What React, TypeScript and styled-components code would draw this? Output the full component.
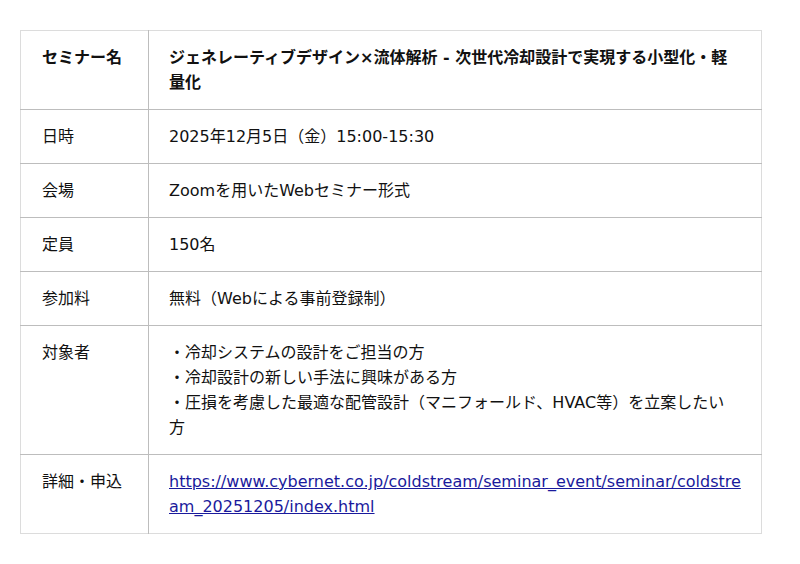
import React from 'react';
import styled, { createGlobalStyle } from 'styled-components';

const GlobalStyle = createGlobalStyle`
  html, body {
    margin: 0;
    padding: 0;
    background: #fff;
  }
  body {
    font-family: "DejaVu Sans", "Noto Sans CJK JP", sans-serif;
    color: #111;
  }
`;

const Page = styled.div`
  padding: 30px 20px;
`;

const Table = styled.table`
  width: 742px;
  border-collapse: collapse;
  border: 1px solid #dcdcdc;
  font-size: 16px;
  line-height: 25px;
`;

const Row = styled.tr`
  & + & > * {
    border-top: 1px solid #bdbdbd;
  }
`;

const Label = styled.th<{ $strong?: boolean }>`
  width: 86px;
  padding: 14px 20px 14px 21px;
  text-align: left;
  vertical-align: top;
  font-weight: ${({ $strong }) => ($strong ? 700 : 400)};
  border-right: 1px solid #bdbdbd;
`;

const Value = styled.td<{ $strong?: boolean }>`
  padding: 14px 19px 14px 20px;
  vertical-align: top;
  font-weight: ${({ $strong }) => ($strong ? 700 : 400)};
  word-break: break-all;
`;

const Targets = styled.div`
  padding-right: 4px;
`;

const Link = styled.a`
  color: #1a1a9c;
  text-decoration: underline;
`;

const rows: { label: string; value: React.ReactNode; strong?: boolean }[] = [
  {
    label: 'セミナー名',
    value: 'ジェネレーティブデザイン×流体解析 - 次世代冷却設計で実現する小型化・軽量化',
    strong: true,
  },
  { label: '日時', value: '2025年12月5日（金）15:00-15:30' },
  { label: '会場', value: 'Zoomを用いたWebセミナー形式' },
  { label: '定員', value: '150名' },
  { label: '参加料', value: '無料（Webによる事前登録制）' },
  {
    label: '対象者',
    value: (
      <Targets>
        ・冷却システムの設計をご担当の方
        <br />
        ・冷却設計の新しい手法に興味がある方
        <br />
        ・圧損を考慮した最適な配管設計（マニフォールド、HVAC等）を立案したい方
      </Targets>
    ),
  },
  {
    label: '詳細・申込',
    value: (
      <Link href="https://www.cybernet.co.jp/coldstream/seminar_event/seminar/coldstream_20251205/index.html">
        https://www.cybernet.co.jp/coldstream/seminar_event/seminar/coldstream_20251205/index.html
      </Link>
    ),
  },
];

export default function App() {
  return (
    <>
      <GlobalStyle />
      <Page>
        <Table>
          <tbody>
            {rows.map((r) => (
              <Row key={r.label}>
                <Label $strong={r.strong}>{r.label}</Label>
                <Value $strong={r.strong}>{r.value}</Value>
              </Row>
            ))}
          </tbody>
        </Table>
      </Page>
    </>
  );
}
